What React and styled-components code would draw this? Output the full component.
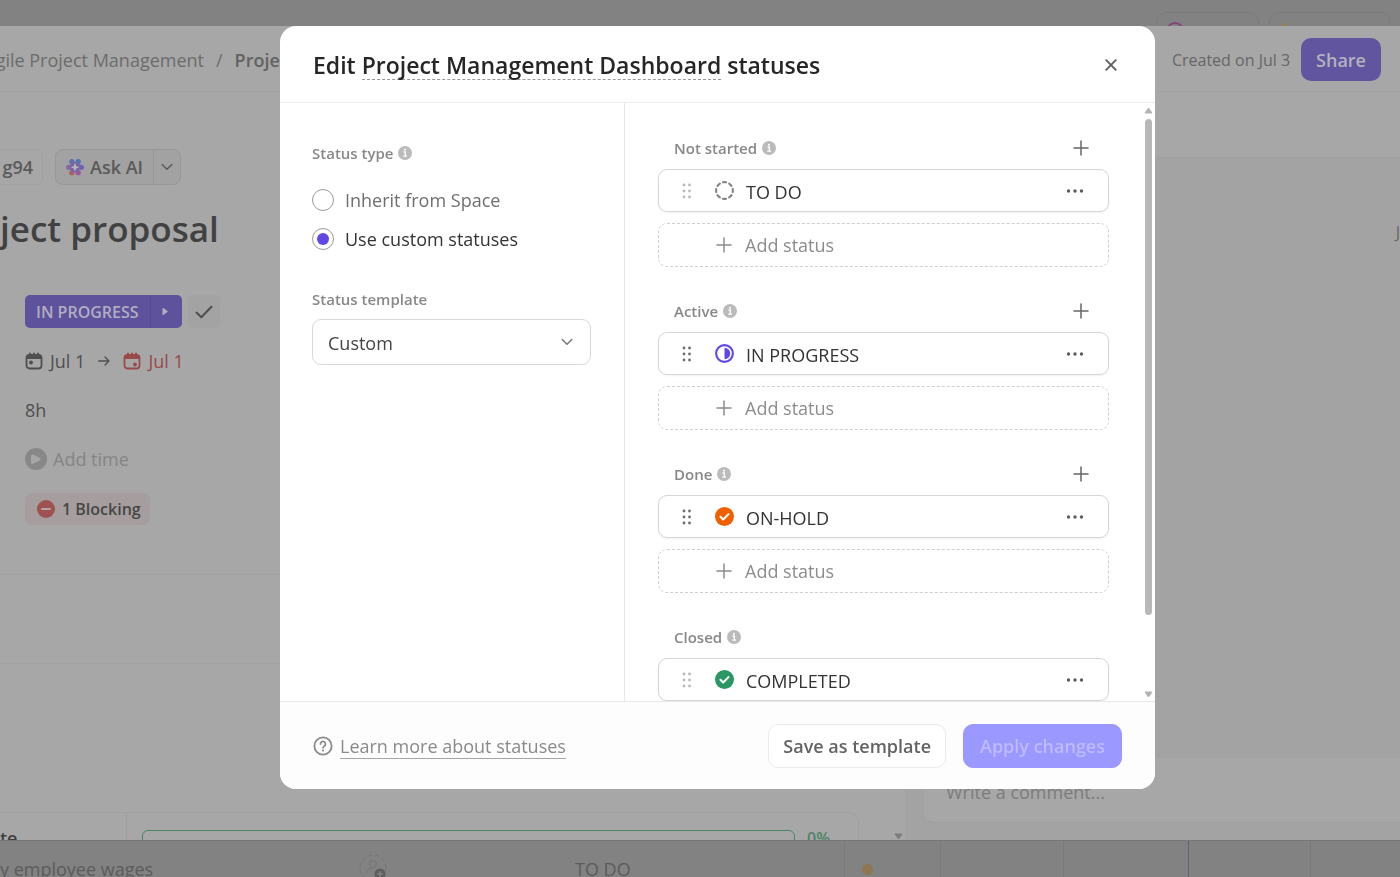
import React from "react";
import styled, { createGlobalStyle } from "styled-components";

const GlobalStyle = createGlobalStyle`
  *, *::before, *::after { box-sizing: border-box; }
  body {
    margin: 0;
    background: #828282;
    color: #4a4a4a;
    font-family: "Open Sans", "Noto Sans", sans-serif;
    font-size: 18px;
    line-height: 24px;
    overflow: hidden;
  }
  button, input, select { font: inherit; color: inherit; }
  button { cursor: pointer; }
  svg { display: block; flex: none; }
`;

/* ---------- page behind the dialog ---------- */

const Page = styled.div`
  display: flex;
  flex-direction: column;
  height: 100vh;
  overflow: hidden;
`;

const TopStrip = styled.div`
  flex: none;
  display: flex;
  justify-content: flex-end;
  gap: 10px;
  height: 26px;
  padding: 12px 10px 0 0;
  overflow: hidden;
`;

const Chip = styled.div`
  flex: none;
  width: ${(p) => p.$width}px;
  height: 36px;
  padding: 9px 9px 0;
  border: 1px solid #7b7b7b;
  border-radius: 10px;
`;

const TaskWindow = styled.main`
  flex: 1;
  min-height: 0;
  display: flex;
  flex-direction: column;
  overflow: hidden;
  background: #a7a7a7;
`;

const TaskHeader = styled.header`
  flex: none;
  display: flex;
  align-items: center;
  justify-content: space-between;
  height: 66px;
  padding: 2px 19px 0 0;
  border-bottom: 1px solid #a1a1a1;
`;

const Breadcrumb = styled.nav`
  display: flex;
  gap: 12px;
  color: #6c6c6c;
  white-space: nowrap;
  a {
    display: flex;
    justify-content: flex-end;
    width: 204px;
    color: inherit;
    text-decoration: none;
  }
  b { font-weight: 600; color: #626262; }
`;

const HeaderSide = styled.div`
  display: flex;
  align-items: center;
  gap: 11px;
  font-size: 16px;
  color: #666;
`;

const ShareButton = styled.button`
  height: 43px;
  padding: 0 15px;
  border: 0;
  border-radius: 10px;
  background: #6155a0;
  color: #b3b1bd;
  font-size: 18px;
  font-weight: 600;
`;

const TaskBody = styled.div`
  flex: 1;
  min-height: 0;
  display: flex;
`;

const TaskMain = styled.section`
  flex: 1;
  min-width: 0;
  display: flex;
  flex-direction: column;
  overflow: hidden;
`;

const ToolRow = styled.div`
  flex: none;
  display: flex;
  gap: 12px;
  height: 36px;
  margin-top: 57px;
  color: #5a5a5a;
  font-weight: 600;
`;

const IdTag = styled.div`
  width: 43px;
  padding: 5px 9px 0 0;
  border: 1px solid #a1a1a1;
  border-left: 0;
  border-radius: 0 6px 6px 0;
  text-align: right;
`;

const AskAi = styled.div`
  display: flex;
  border: 1px solid #9b959b;
  border-radius: 8px;
  background: #a2a2a2;
  button {
    display: flex;
    align-items: center;
    gap: 6px;
    padding: 0 10px;
    border: 0;
    background: none;
    font-weight: 600;
  }
  button + button { padding: 0 7px; border-left: 1px solid #9b959b; }
`;

const TaskTitle = styled.h1`
  flex: none;
  margin: 20px 0 0;
  font-size: 35px;
  line-height: 48px;
  font-weight: 600;
  color: #414141;
  white-space: nowrap;
`;

const Fields = styled.div`
  flex: none;
  display: flex;
  flex-direction: column;
  align-items: flex-start;
  gap: 16px;
  height: 322px;
  padding: 42px 0 0 25px;
  border-bottom: 1px solid #a1a1a1;
`;

const Field = styled.div`
  display: flex;
  align-items: center;
  gap: ${(p) => p.$gap || 6}px;
  height: 33px;
  color: ${(p) => p.$color || "#4f4f4f"};
`;

const StatusButton = styled.div`
  display: flex;
  height: 33px;
  border-radius: 5px;
  overflow: hidden;
  background: #5d529b;
  color: #b1aec2;
  font-size: 16px;
  button {
    display: flex;
    align-items: center;
    padding: 0 11px;
    border: 0;
    background: none;
    font-weight: 600;
  }
  button + button { width: 32px; padding: 0 11px; border-left: 1px solid #544a8d; }
`;

const CheckButton = styled.button`
  display: flex;
  align-items: center;
  justify-content: center;
  width: 32px;
  height: 33px;
  padding: 0;
  border: 0;
  border-radius: 6px;
  background: #a3a3a3;
`;

const DateValue = styled.span`
  display: flex;
  align-items: center;
  gap: 7px;
  color: ${(p) => (p.$late ? "#994a4a" : "inherit")};
`;

const BlockingTag = styled.div`
  display: flex;
  align-items: center;
  gap: 7px;
  height: 32px;
  margin-top: 2px;
  padding: 0 9px 0 12px;
  border-radius: 7px;
  background: #a69e9e;
  color: #464646;
  font-size: 16px;
  font-weight: 600;
`;

const Band = styled.div`
  flex: none;
  height: 89px;
  border-bottom: 1px solid #a1a1a1;
`;

const TableArea = styled.div`
  flex: 1;
  display: flex;
  align-items: flex-end;
  justify-content: space-between;
  padding-right: 2px;
`;

const ProgressRow = styled.div`
  flex: 1;
  display: flex;
  height: 28px;
  margin-right: 35px;
  border: solid #a0a0a0;
  border-width: 1px 1px 0 0;
  border-radius: 0 10px 0 0;
  overflow: hidden;
`;

const ProgressName = styled.div`
  width: 127px;
  padding-top: 13px;
  border-right: 1px solid #a0a0a0;
  color: #3f3f3f;
  font-weight: 600;
`;

const ProgressTrack = styled.div`
  flex: 1;
  height: 26px;
  margin: 17px 12px 0 15px;
  border: 1px solid #4c8468;
  border-radius: 6px;
`;

const ProgressValue = styled.div`
  width: 51px;
  padding-top: 13px;
  color: #4c8468;
  font-size: 16px;
  font-weight: 600;
`;

const Activity = styled.aside`
  flex: none;
  width: 495px;
  display: flex;
  flex-direction: column;
  background: #a3a3a3;
`;

const ActivityHeader = styled.div`
  height: 66px;
  background: #a7a7a7;
  border-bottom: 1px solid #a1a1a1;
`;

const ActivityLog = styled.div`
  flex: 1;
  padding-top: 62px;
  color: #666;
  font-size: 16px;
  text-align: right;
`;

const CommentBox = styled.input`
  height: 65px;
  margin: 0 0 17px 19px;
  padding: 3px 22px 0;
  border: 0;
  border-bottom: 1px solid #a39d9d;
  border-radius: 10px 0 0 10px;
  background: #a7a7a7;
  &::placeholder { color: #7c7c7c; opacity: 1; }
`;

const BottomStrip = styled.div`
  flex: none;
  display: flex;
  height: 37px;
  border-top: 1px solid #7a7676;
  color: #5b5b5b;
  white-space: nowrap;
  overflow: hidden;
`;

const Cell = styled.div`
  flex: ${(p) => (p.$width ? "none" : "1")};
  width: ${(p) => (p.$width ? p.$width + "px" : "auto")};
  padding-top: ${(p) => p.$top || 16}px;
  border-right: 1px solid ${(p) => p.$line || "transparent"};
`;

const Dot = styled.div`
  width: 11px;
  height: 11px;
  margin-left: 17px;
  border-radius: 50%;
  background: #8d7650;
`;

/* ---------- dialog ---------- */

const Overlay = styled.div`
  position: fixed;
  inset: 0;
  display: flex;
  padding: 26px 245px 88px 280px;
`;

const Dialog = styled.section`
  flex: 1;
  min-width: 0;
  display: flex;
  flex-direction: column;
  overflow: hidden;
  border-radius: 16px;
  background: #fff;
  color: #2f2f2f;
`;

const DialogHeader = styled.header`
  flex: none;
  display: flex;
  align-items: center;
  justify-content: space-between;
  height: 77px;
  padding: 2px 33px 0;
  border-bottom: 1px solid #ececec;
`;

const DialogTitle = styled.h2`
  margin: 0;
  font-size: 23px;
  line-height: 32px;
  font-weight: 600;
  color: #262626;
  white-space: nowrap;
  span {
    display: inline-block;
    line-height: 28px;
    border-bottom: 1px dashed #9a9a9a;
  }
`;

const IconButton = styled.button`
  display: flex;
  align-items: center;
  justify-content: center;
  width: 22px;
  height: 22px;
  padding: 0;
  border: 0;
  background: none;
  color: #5c5c5c;
`;

const DialogBody = styled.div`
  flex: 1;
  min-height: 0;
  display: flex;
`;

const Settings = styled.div`
  flex: none;
  width: 345px;
  padding: 38px 33px 0 32px;
  border-right: 1px solid #e6e6e6;
`;

const Caption = styled.div`
  display: flex;
  align-items: center;
  gap: 5px;
  font-size: 15px;
  font-weight: 600;
  color: #888;
`;

const RadioList = styled.div`
  display: flex;
  flex-direction: column;
  gap: 15px;
  margin: 23px 0 36px;
`;

const RadioLabel = styled.label`
  display: flex;
  align-items: center;
  gap: 11px;
  color: ${(p) => (p.$on ? "#333" : "#6f6f6f")};
`;

const Radio = styled.input.attrs({ type: "radio" })`
  appearance: none;
  display: grid;
  place-items: center;
  width: 22px;
  height: 22px;
  margin: 0;
  border: 1px solid #9a9a9a;
  border-radius: 50%;
  &:checked::before {
    content: "";
    width: 12px;
    height: 12px;
    border-radius: 50%;
    background: #5f48e6;
  }
`;

const SelectWrap = styled.div`
  display: grid;
  align-items: center;
  margin-top: 8px;
  select, svg { grid-area: 1 / 1; }
  svg { justify-self: end; margin-right: 18px; pointer-events: none; }
`;

const Select = styled.select`
  appearance: none;
  width: 100%;
  height: 46px;
  padding: 2px 15px 0;
  border: 1px solid #d9d9d9;
  border-radius: 9px;
  background: #fff;
  color: #444;
`;

const Statuses = styled.div`
  flex: 1;
  min-width: 0;
  display: flex;
  flex-direction: column;
  gap: 32px;
  padding: 33px 35px 0 33px;
  overflow: hidden;
`;

const Group = styled.section`
  flex: none;
  display: flex;
  flex-direction: column;
`;

const GroupHeader = styled.div`
  display: flex;
  align-items: center;
  justify-content: space-between;
  height: 24px;
  margin-bottom: 9px;
  padding: 0 17px 0 16px;
`;

const StatusCard = styled.div`
  display: flex;
  align-items: center;
  height: 43px;
  padding: 0 22px 0 23px;
  border: 1px solid #d6d6d6;
  border-radius: 9px;
  box-shadow: 0 1px 2px rgba(0, 0, 0, 0.06);
`;

const Handle = styled.span`
  width: 33px;
  color: ${(p) => (p.$faded ? "#b9b9b9" : "#6c6c6c")};
`;

const StatusName = styled.span`
  flex: 1;
  margin-left: 12px;
  padding-top: 2px;
  color: #333;
`;

const AddButton = styled.button`
  display: flex;
  align-items: center;
  gap: 13px;
  height: 44px;
  margin-top: 11px;
  padding: 0 0 0 57px;
  border: 1px dashed #cfcfcf;
  border-radius: 9px;
  background: none;
  color: #8c8c8c;
`;

const Scrollbar = styled.div`
  flex: none;
  display: flex;
  flex-direction: column;
  align-items: center;
  width: 9px;
  margin-right: 2px;
  padding: 4px 0 3px;
`;

const Thumb = styled.div`
  width: 7px;
  height: 84%;
  margin: 5px 0 auto;
  border-radius: 4px;
  background: #b8b8b8;
`;

const DialogFooter = styled.footer`
  flex: none;
  display: flex;
  align-items: center;
  gap: 17px;
  height: 88px;
  padding: 0 33px;
  border-top: 1px solid #e8e8e8;
  background: #fdfdfd;
`;

const HelpLink = styled.a`
  display: flex;
  align-items: center;
  gap: 7px;
  margin-right: auto;
  padding-top: 1px;
  color: #8a8a8a;
  text-decoration: none;
  span { border-bottom: 1px solid #a5a5a5; line-height: 24px; }
`;

const FooterButton = styled.button`
  height: 44px;
  padding: 0 ${(p) => (p.$primary ? 16 : 14)}px;
  border: 1px solid ${(p) => (p.$primary ? "#9b98ff" : "#ebebeb")};
  border-radius: 10px;
  background: ${(p) => (p.$primary ? "#9b98ff" : "#fff")};
  color: ${(p) => (p.$primary ? "#bdbbff" : "#636363")};
  font-weight: 600;
`;

/* ---------- icons ---------- */

const stroke = { fill: "none", stroke: "currentColor", strokeLinecap: "round", strokeLinejoin: "round" };

const InfoIcon = () => (
  <svg width="14" height="14" viewBox="0 0 14 14">
    <circle cx="7" cy="7" r="7" fill="#bbb" />
    <path d="M5.5 6h1.8v4M5.2 10.2h3.8" stroke="#fff" strokeWidth="1.3" fill="none" />
    <circle cx="7" cy="3.7" r="1" fill="#fff" />
  </svg>
);

const PlusIcon = ({ color = "#666" }) => (
  <svg width="16" height="16" viewBox="0 0 16 16">
    <path d="M8 1v14M1 8h14" {...stroke} stroke={color} strokeWidth="1.5" />
  </svg>
);

const CloseIcon = () => (
  <svg width="12" height="12" viewBox="0 0 12 12">
    <path d="M1.2 1.2l9.6 9.6M10.8 1.2l-9.6 9.6" {...stroke} strokeWidth="1.8" />
  </svg>
);

const ChevronIcon = ({ color = "#777" }) => (
  <svg width="12" height="8" viewBox="0 0 12 8">
    <path d="M1.2 1.5L6 6.3l4.8-4.8" {...stroke} stroke={color} strokeWidth="1.5" />
  </svg>
);

const GripIcon = () => (
  <svg width="10" height="16" viewBox="0 0 10 16" fill="currentColor">
    {[2, 8, 14].map((y) => (
      <g key={y}>
        <circle cx="2" cy={y} r="1.4" />
        <circle cx="7.5" cy={y} r="1.4" />
      </g>
    ))}
  </svg>
);

const MoreIcon = () => (
  <svg width="18" height="4" viewBox="0 0 18 4" fill="currentColor">
    <circle cx="2.5" cy="2" r="1.7" />
    <circle cx="9" cy="2" r="1.7" />
    <circle cx="15.5" cy="2" r="1.7" />
  </svg>
);

const StatusIcon = ({ kind, color }) => (
  <svg width="19" height="19" viewBox="0 0 20 20">
    {kind === "open" && (
      <circle cx="10" cy="10" r="8.8" fill="none" stroke={color} strokeWidth="2.2" strokeLinecap="round"
        pathLength="80" strokeDasharray="5 5" strokeDashoffset="2.5" />
    )}
    {kind === "half" && (
      <>
        <circle cx="10" cy="10" r="8.8" fill="none" stroke={color} strokeWidth="2.2" />
        <path d="M10 4a6 6 0 0 1 0 12z" fill={color} />
      </>
    )}
    {kind === "done" && (
      <>
        <circle cx="10" cy="10" r="10" fill={color} />
        <path d="M5.8 10.3l2.8 2.8 5.6-5.6" {...stroke} stroke="#fff" strokeWidth="2.2" />
      </>
    )}
  </svg>
);

const HelpIcon = () => (
  <svg width="20" height="20" viewBox="0 0 20 20">
    <circle cx="10" cy="10" r="8.6" {...stroke} strokeWidth="1.8" />
    <path d="M7.5 8a2.5 2.5 0 1 1 3.8 2.1c-.9.6-1.3.9-1.3 1.7" {...stroke} strokeWidth="1.7" />
    <circle cx="10" cy="14.5" r="1.1" fill="currentColor" />
  </svg>
);

const AiIcon = () => (
  <svg width="18" height="18" viewBox="0 0 20 20">
    <circle cx="6.4" cy="4" r="2.9" fill="#5d70ad" />
    <circle cx="13.6" cy="4" r="2.9" fill="#4d78b0" />
    <circle cx="3" cy="10.4" r="2.9" fill="#8668a8" />
    <circle cx="17" cy="10.4" r="2.9" fill="#6c64b0" />
    <circle cx="6.4" cy="16.4" r="2.9" fill="#b05c62" />
    <circle cx="13.6" cy="16.4" r="2.9" fill="#a2559c" />
    <circle cx="10" cy="10.2" r="6" fill="#7a64a5" />
    <path d="M10 5.4l1.4 3.4 3.4 1.4-3.400 1.400-1.400 3.400-1.400-3.400-3.400-1.400 3.400-1.400z" fill="#b5b5b8" />
  </svg>
);

const CalendarIcon = ({ end }) => (
  <svg width="18" height="18" viewBox="0 0 18 18">
    <rect x="1.5" y="3" width="15" height="13.5" rx="3" {...stroke} strokeWidth="1.8" />
    <path d="M1.5 7V5.5a2.5 2.5 0 0 1 2.5-2.5h10a2.5 2.5 0 0 1 2.5 2.5V7z" fill="currentColor" />
    <path d="M5 1.3v3M9 1.3v3M13 1.3v3" {...stroke} strokeWidth="1.8" />
    <circle cx={end ? 12 : 6} cy={end ? 12.5 : 10.5} r="1.9" fill="currentColor" />
  </svg>
);

const ArrowIcon = () => (
  <svg width="12" height="12" viewBox="0 0 12 12">
    <path d="M.8 6h10M7 2l4 4-4 4" {...stroke} strokeWidth="1.3" />
  </svg>
);

const CheckIcon = () => (
  <svg width="18" height="14" viewBox="0 0 18 14">
    <path d="M1.5 7.5l4.8 4.8L16.5 1.8" {...stroke} strokeWidth="2" />
  </svg>
);

const CaretIcon = () => (
  <svg width="7" height="9" viewBox="0 0 7 9">
    <path d="M1 1.2v6.6L5.4 4.5z" fill="currentColor" stroke="currentColor" strokeLinejoin="round" />
  </svg>
);

const PlayIcon = () => (
  <svg width="22" height="22" viewBox="0 0 22 22">
    <circle cx="11" cy="11" r="11" fill="#888" />
    <path d="M7.5 8v6.500L14 11.200z" fill="#a7a7a7" stroke="#a7a7a7" strokeWidth="3" strokeLinejoin="round" />
  </svg>
);

const BlockIcon = () => (
  <svg width="18" height="18" viewBox="0 0 18 18">
    <circle cx="9" cy="9" r="9" fill="#9f5050" />
    <path d="M5 9h8" stroke="#b3a5a5" strokeWidth="2" strokeLinecap="round" />
  </svg>
);

const AssigneeIcon = () => (
  <svg width="28" height="28" viewBox="0 0 28 28" fill="none" stroke="#747474">
    <circle cx="14" cy="14" r="13" strokeDasharray="4 3" />
    <circle cx="14" cy="10" r="3.5" />
    <path d="M8 19c0-3.500 2.500-5 6-5" />
    <circle cx="21" cy="20" r="5.500" fill="#5f5f5f" stroke="none" />
    <path d="M21 17.500v5M18.500 20h5" stroke="#828282" strokeWidth="1.500" />
  </svg>
);

const ArrowHead = ({ down, color = "#b3b3b3" }) => (
  <svg width="9" height="7" viewBox="0 0 9 7">
    <path d={down ? "M1 1h7L4.5 6z" : "M1 6h7L4.5 1z"} fill={color} stroke={color} strokeLinejoin="round" />
  </svg>
);

const GROUPS = [
  { title: "Not started", add: true, name: "TO DO", kind: "open", color: "#858585", faded: true },
  { title: "Active", add: true, name: "IN PROGRESS", kind: "half", color: "#5f48e6" },
  { title: "Done", add: true, name: "ON-HOLD", kind: "done", color: "#f06000" },
  { title: "Closed", add: false, name: "COMPLETED", kind: "done", color: "#2a9764", faded: true },
];

const StatusGroup = ({ title, add, name, kind, color, faded }) => (
  <Group>
    <GroupHeader>
      <Caption>{title}<InfoIcon /></Caption>
      {add && <IconButton aria-label={`Add to ${title}`}><PlusIcon /></IconButton>}
    </GroupHeader>
    <StatusCard>
      <Handle $faded={faded}><GripIcon /></Handle>
      <StatusIcon kind={kind} color={color} />
      <StatusName>{name}</StatusName>
      <IconButton aria-label={`${name} options`}><MoreIcon /></IconButton>
    </StatusCard>
    {add && <AddButton><PlusIcon color="#8c8c8c" />Add status</AddButton>}
  </Group>
);

const Background = () => (
  <Page>
    <TopStrip>
      <Chip $width={103}>
        <svg width="18" height="18" viewBox="0 0 18 18">
          <circle cx="9" cy="9" r="8" fill="none" stroke="#85447c" strokeWidth="2" />
        </svg>
      </Chip>
      <Chip $width={121}>
        <svg width="16" height="16" viewBox="0 0 16 16"><path d="M7 0L0 7v2h6l-1 6 9-9H7z" fill="#a27a45" /></svg>
      </Chip>
    </TopStrip>
    <TaskWindow>
      <TaskHeader>
        <Breadcrumb>
          <a href="#space">gile Project Management</a>
          <span>/</span>
          <b>Project</b>
        </Breadcrumb>
        <HeaderSide>
          Created on Jul 3
          <ShareButton>Share</ShareButton>
        </HeaderSide>
      </TaskHeader>
      <TaskBody>
        <TaskMain>
          <ToolRow>
            <IdTag>g94</IdTag>
            <AskAi>
              <button><AiIcon />Ask AI</button>
              <button aria-label="More AI actions"><ChevronIcon color="#5a5a5a" /></button>
            </AskAi>
          </ToolRow>
          <TaskTitle>ject proposal</TaskTitle>
          <Fields>
            <Field>
              <StatusButton>
                <button>IN PROGRESS</button>
                <button aria-label="Next status"><CaretIcon /></button>
              </StatusButton>
              <CheckButton aria-label="Mark complete"><CheckIcon /></CheckButton>
            </Field>
            <Field $gap={13}>
              <DateValue><CalendarIcon />Jul 1</DateValue>
              <ArrowIcon />
              <DateValue $late><CalendarIcon end />Jul 1</DateValue>
            </Field>
            <Field>8h</Field>
            <Field $color="#858585"><PlayIcon />Add time</Field>
            <BlockingTag><BlockIcon />1 Blocking</BlockingTag>
          </Fields>
          <Band />
          <TableArea>
            <ProgressRow>
              <ProgressName>te</ProgressName>
              <ProgressTrack />
              <ProgressValue>0%</ProgressValue>
            </ProgressRow>
            <ArrowHead down color="#7d7d7d" />
          </TableArea>
        </TaskMain>
        <Activity>
          <ActivityHeader />
          <ActivityLog>J</ActivityLog>
          <CommentBox aria-label="Comment" placeholder="Write a comment..." />
        </Activity>
      </TaskBody>
    </TaskWindow>
    <BottomStrip>
      <Cell $width={359}>y employee wages</Cell>
      <Cell $width={216} $top={13}><AssigneeIcon /></Cell>
      <Cell $line="#7a7a7a">TO DO</Cell>
      <Cell $width={96} $top={23} $line="#7a7a7a"><Dot /></Cell>
      <Cell $width={123} $line="#7a7a7a" />
      <Cell $width={125} $line="#62607f" />
      <Cell $width={122} $line="#7a7a7a" />
      <Cell $width={89} />
    </BottomStrip>
  </Page>
);

export default function App() {
  return (
    <>
      <GlobalStyle />
      <Background />
      <Overlay>
        <Dialog role="dialog" aria-labelledby="dialog-title">
          <DialogHeader>
            <DialogTitle id="dialog-title">
              Edit <span>Project Management Dashboard</span> statuses
            </DialogTitle>
            <IconButton aria-label="Close"><CloseIcon /></IconButton>
          </DialogHeader>
          <DialogBody>
            <Settings>
              <Caption>Status type<InfoIcon /></Caption>
              <RadioList>
                <RadioLabel><Radio name="type" />Inherit from Space</RadioLabel>
                <RadioLabel $on><Radio name="type" defaultChecked />Use custom statuses</RadioLabel>
              </RadioList>
              <Caption as="label" htmlFor="template">Status template</Caption>
              <SelectWrap>
                <Select id="template"><option>Custom</option></Select>
                <ChevronIcon />
              </SelectWrap>
            </Settings>
            <Statuses>
              {GROUPS.map((g) => <StatusGroup key={g.title} {...g} />)}
            </Statuses>
            <Scrollbar>
              <ArrowHead />
              <Thumb />
              <ArrowHead down />
            </Scrollbar>
          </DialogBody>
          <DialogFooter>
            <HelpLink href="#statuses"><HelpIcon /><span>Learn more about statuses</span></HelpLink>
            <FooterButton>Save as template</FooterButton>
            <FooterButton $primary disabled>Apply changes</FooterButton>
          </DialogFooter>
        </Dialog>
      </Overlay>
    </>
  );
}
